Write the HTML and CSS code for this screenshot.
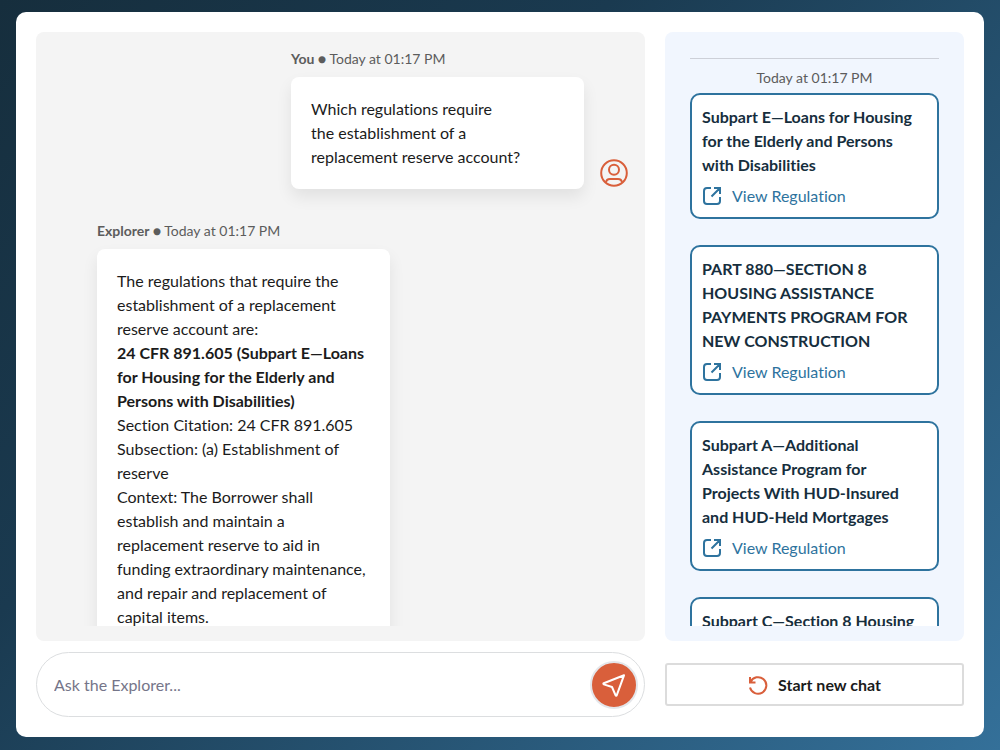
FILE: index.html
```html
<!DOCTYPE html>
<html lang="en">
<head>
    <meta charset="UTF-8">
    <meta name="viewport" content="width=device-width, initial-scale=1.0">
    <title>Regulation Explorer</title>
    <link rel="stylesheet" href="styles.css">
</head>
<body>
    <!-- Shared icons -->
    <svg class="sprite" aria-hidden="true">
        <symbol id="icon-external" viewBox="0 0 20 20">
            <path d="M9 2H5a3 3 0 0 0-3 3v10a3 3 0 0 0 3 3h10a3 3 0 0 0 3-3v-4M12 2h6v6M18 2l-8.500 8.500" />
        </symbol>
    </svg>

    <main class="app">
        <section class="panel chat" aria-label="Conversation">
            <div class="scroll">
                <div class="message user">
                    <div class="message-body">
                        <div class="meta"><strong>You ●</strong> Today at 01:17 PM</div>
                        <div class="bubble">Which regulations require<br>the establishment of a<br>replacement reserve account?</div>
                    </div>
                    <svg class="avatar" viewBox="0 0 28 28" aria-hidden="true">
                        <circle cx="14" cy="14" r="12.800" />
                        <circle cx="14" cy="10.700" r="5" />
                        <path d="M6 23.500C6.300 21 7.800 20 10 20h8c2.200 0 3.700 1 4 3.500" />
                    </svg>
                </div>

                <div class="message explorer">
                    <div class="message-body">
                        <div class="meta"><strong>Explorer ●</strong> Today at 01:17 PM</div>
                        <div class="bubble">
                            <p>The regulations that require the establishment of a replacement reserve account are:</p>
                            <p><strong>24 CFR 891.605 (Subpart E—Loans for Housing for the Elderly and Persons with Disabilities)</strong></p>
                            <p>Section Citation: 24 CFR 891.605</p>
                            <p>Subsection: (a) Establishment of reserve</p>
                            <p>Context: The Borrower shall establish and maintain a replacement reserve to aid in funding extraordinary maintenance, and repair and replacement of capital items.</p>
                        </div>
                    </div>
                </div>
            </div>
        </section>

        <aside class="panel sources" aria-label="Regulations">
            <div class="scroll">
                <div class="sources-date">Today at 01:17 PM</div>
                <div class="card">
                    <h2>Subpart E—Loans for Housing for the Elderly and Persons with Disabilities</h2>
                    <a href="#"><svg class="icon"><use href="#icon-external" /></svg>View Regulation</a>
                </div>
                <div class="card">
                    <h2>PART 880—SECTION 8 HOUSING ASSISTANCE PAYMENTS PROGRAM FOR NEW CONSTRUCTION</h2>
                    <a href="#"><svg class="icon"><use href="#icon-external" /></svg>View Regulation</a>
                </div>
                <div class="card">
                    <h2>Subpart A—Additional Assistance Program for Projects With HUD-Insured and HUD-Held Mortgages</h2>
                    <a href="#"><svg class="icon"><use href="#icon-external" /></svg>View Regulation</a>
                </div>
                <div class="card">
                    <h2>Subpart C—Section 8 Housing</h2>
                </div>
            </div>
        </aside>

        <form class="ask" onsubmit="return false;">
            <input type="text" placeholder="Ask the Explorer..." aria-label="Ask the Explorer">
            <button type="submit" class="send" aria-label="Send">
                <svg viewBox="0 0 24 24" aria-hidden="true">
                    <path d="M22 2.300 1.800 10.200c-.6.300-.6.900 0 1.200L10 14l3.600 8.400c.3.600.9.600 1.100 0Z" />
                </svg>
            </button>
        </form>

        <button type="button" class="new-chat">
            <svg viewBox="0 0 20 20" aria-hidden="true">
                <path d="M2 2v5.500h5.500M2.500 7A8.300 8.300 0 1 1 2 12.500" />
            </svg>
            Start new chat
        </button>
    </main>
</body>
</html>
```
FILE: styles.css
```css
* {
    box-sizing: border-box;
}
body {
    margin: 0;
    padding: 12px 16px 13px;
    height: 100vh;
    font-family: Lato, "Liberation Sans", sans-serif;
    font-size: 16px;
    line-height: 24px;
    font-variant-ligatures: none;
    color: #1b1b1b;
    background: linear-gradient(135deg, #162e3d, #1a3a50 35%, #347099);
}
.sprite {
    display: none;
}
.app {
    display: grid;
    grid-template-columns: 1fr 299px;
    grid-template-rows: minmax(0, 1fr) auto;
    gap: 11px 20px;
    height: 100%;
    padding: 20px;
    background: #fff;
    border-radius: 10px;
}
.panel {
    border-radius: 8px;
    padding-bottom: 15px;
}
.scroll {
    height: 100%;
    overflow: hidden;
}

/* Conversation */
.chat {
    background: #f4f4f4;
}
.chat .scroll {
    padding: 17px;
}
.message {
    display: flex;
    align-items: flex-end;
    gap: 16px;
    margin-bottom: 32px;
}
.message.user {
    justify-content: flex-end;
}
.message.explorer {
    padding-left: 44px;
}
.message-body {
    width: 293px;
}
.meta {
    margin-bottom: 8px;
    font-size: 14px;
    line-height: 20px;
    color: #5c5c5c;
}
.bubble {
    padding: 20px;
    background: #fff;
    border-radius: 8px;
    box-shadow: 0 8px 16px rgba(0, 0, 0, 0.08);
}
.bubble p {
    margin: 0;
}
.avatar {
    width: 28px;
    height: 28px;
    margin-bottom: 2px;
    fill: none;
    stroke: #d95f3b;
    stroke-width: 2;
}

/* Regulations */
.sources {
    background: #f1f6fe;
}
.sources .scroll {
    padding: 26px 25px 0;
}
.sources-date {
    padding: 9px 0 5px;
    border-top: 1px solid #cdd0d8;
    font-size: 14px;
    line-height: 20px;
    text-align: center;
    color: #5c5c5c;
}
.card {
    margin-bottom: 26px;
    padding: 10px;
    background: #fff;
    border: 2px solid #2e739e;
    border-radius: 10px;
}
.card h2 {
    margin: 0 0 8px;
    font-size: 16px;
    line-height: 24px;
    color: #162e3d;
}
.card a {
    display: flex;
    align-items: center;
    gap: 10px;
    line-height: 22px;
    color: #2e739e;
    text-decoration: none;
}
.icon {
    width: 20px;
    height: 20px;
    fill: none;
    stroke: currentColor;
    stroke-width: 2;
}

/* Bottom row */
.ask {
    display: flex;
    align-items: center;
    height: 65px;
    padding: 0 6px 0 17px;
    border: 1px solid #dcdee0;
    border-radius: 33px;
}
.ask input {
    flex: 1;
    padding: 0;
    border: 0;
    outline: none;
    background: none;
    font: inherit;
    font-variant-ligatures: none;
}
.ask input::placeholder {
    color: #757589;
}
.send {
    display: flex;
    align-items: center;
    justify-content: center;
    width: 48px;
    height: 48px;
    padding: 0;
    border: 2px solid #e4e6ea;
    border-radius: 50%;
    background: #d95f3b;
}
.send svg {
    width: 24px;
    height: 24px;
    fill: none;
    stroke: #fff;
    stroke-width: 2;
    stroke-linejoin: round;
}
.new-chat {
    display: flex;
    align-items: center;
    justify-content: center;
    align-self: center;
    gap: 10px;
    height: 43px;
    padding: 0;
    border: 2px solid #dcdcdc;
    border-radius: 3px;
    background: #fff;
    font: inherit;
    font-weight: bold;
    color: #1b1b1b;
}
.new-chat svg {
    width: 20px;
    height: 20px;
    fill: none;
    stroke: #d95f3b;
    stroke-width: 2;
}
```
